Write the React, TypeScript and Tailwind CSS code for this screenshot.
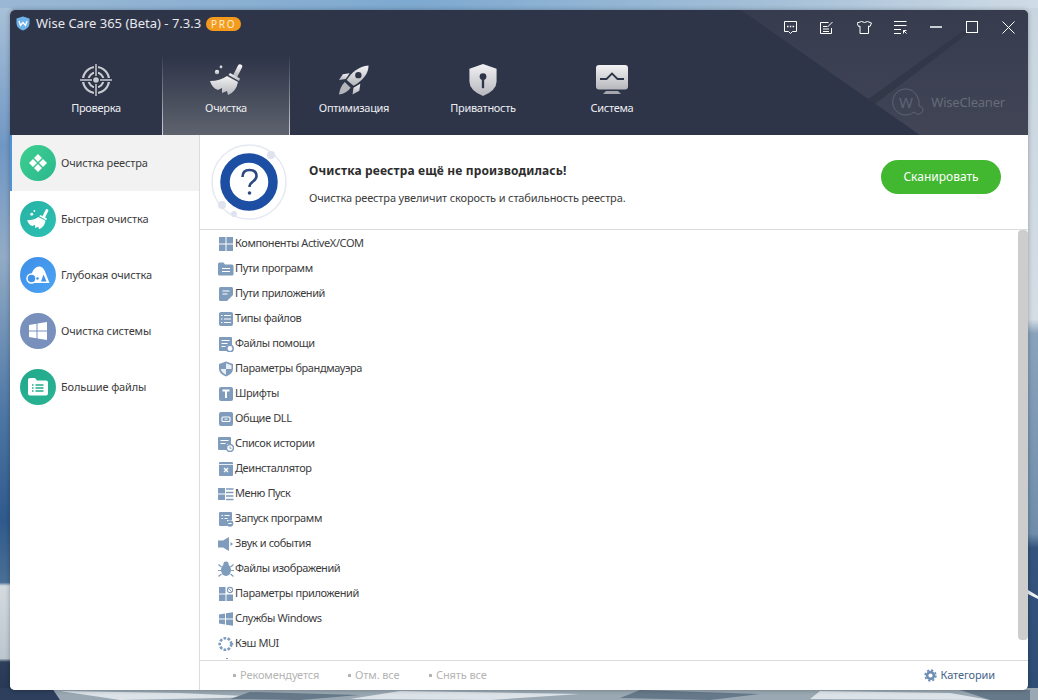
import React from 'react';

const font = "font-['Noto_Sans','Liberation_Sans',sans-serif]";

const TopTab = ({
  label,
  active,
  icon,
  shift,
}: {
  label: string;
  active?: boolean;
  icon: React.ReactNode;
  shift?: string;
}) => (
  <div
    className={`flex flex-col items-center w-[128px] h-[78px] pt-[5px] ${shift ?? ''} ${
      active
        ? 'bg-gradient-to-b from-[#2f3549] to-[#5f636e] border-x [border-image:linear-gradient(to_bottom,#363c50,#d4d6da)_1]'
        : ''
    }`}
  >
    <div className="h-[36px] flex items-center justify-center">{icon}</div>
    <span className="mt-[2px] text-[11px] leading-[16px] tracking-[-0.3px] text-[#eceef2]">{label}</span>
  </div>
);

const SideItem = ({
  label,
  color,
  active,
  icon,
}: {
  label: string;
  color: string;
  active?: boolean;
  icon: React.ReactNode;
}) => (
  <div
    className={`h-[56px] flex items-center gap-[5px] ${
      active ? 'bg-[#f2f2f2] border-l-[2px] border-[#4f93d8] pl-[8px]' : 'pl-[10px]'
    }`}
  >
    <div className={`w-[36px] h-[36px] rounded-full flex items-center justify-center ${color}`}>{icon}</div>
    <span className="text-[11px] tracking-[-0.15px] text-[#3c3c3c]">{label}</span>
  </div>
);

const Broom = ({ w, h, fill }: { w: number; h: number; fill: string }) => (
  <svg width={w} height={h} viewBox="0 0 33 32">
    <path d="M30 2.500l-4.500 9" stroke={fill} strokeWidth="4.500" strokeLinecap="round" fill="none" />
    <path d="M20 9l10 5.500-1 2.500-10.500-6z" fill={fill} />
    <path d="M17 12q-7 5-17 5 2 7 8 9l4-2v5l5-2 1 4q8-3 10-13z" fill={fill} />
    <circle cx="7" cy="8" r="2.200" fill={fill} />
    <circle cx="11" cy="3" r="1.400" fill={fill} />
  </svg>
);

// small list glyphs, all in the same slate blue
const c = '#7f9cbd';
const listIcons: Record<string, React.ReactNode> = {
  activex: (
    <>
      <rect x="1" y="1" width="6.500" height="6.500" fill={c} />
      <rect x="8.500" y="1" width="6.500" height="6.500" fill={c} />
      <rect x="1" y="8.500" width="6.500" height="6.500" fill={c} />
      <rect x="8.500" y="8.500" width="6.500" height="6.500" fill={c} />
    </>
  ),
  folder: (
    <>
      <path d="M0 3q0-1.500 1.500-1.500h4l1.500 2h7q1.500 0 1.500 1.500v8q0 1.500-1.500 1.500h-12.500q-1.500 0-1.500-1.500z" fill={c} />
      <path d="M4 7.500h8M4 10.500h8" stroke="#fff" strokeWidth="1.200" />
    </>
  ),
  file: (
    <>
      <path d="M2.500 1h11q1.500 0 1.500 1.500v6.500l-6 6h-6.500q-1.500 0-1.500-1.500v-11q0-1.500 1.500-1.500z" fill={c} />
      <path d="M4.500 5h7M4.500 8h5" stroke="#fff" strokeWidth="1.200" />
    </>
  ),
  list: (
    <>
      <rect x="1" y="1" width="14" height="14" rx="2" fill={c} />
      <path d="M6 4.500h7M6 8h7M6 11.500h7M3 4.500h1.500M3 8h1.500M3 11.500h1.500" stroke="#fff" strokeWidth="1.100" />
    </>
  ),
  help: (
    <>
      <path d="M2 1h11q1 0 1 1v7h-5v6h-7q-1 0-1-1v-12q0-1 1-1z" fill={c} />
      <path d="M3.500 4.500h8M3.500 7.500h6M3.500 10.500h4" stroke="#fff" strokeWidth="1.100" />
      <circle cx="12" cy="12.500" r="3.200" fill="none" stroke={c} strokeWidth="1.500" />
    </>
  ),
  shield: (
    <>
      <path d="M8 .5l7 2.500v5q0 4.500-7 7.500q-7-3-7-7.500v-5z" fill={c} />
      <path d="M8 2.200l5.500 2v3.800h-5.500zM8 8h-5.300q.8 3.500 5.300 5.700z" fill="#e9eef4" />
    </>
  ),
  font: (
    <>
      <rect x="1" y="1" width="14" height="14" rx="2" fill={c} />
      <path d="M4.500 4.500h7M8 4.500v7.500" stroke="#fff" strokeWidth="2" />
    </>
  ),
  dll: (
    <>
      <rect x="1" y="1" width="14" height="14" rx="2" fill={c} />
      <rect x="4" y="6" width="8" height="4.500" rx="1" fill="none" stroke="#fff" strokeWidth="1.100" />
      <path d="M6.500 8.200h3" stroke="#fff" strokeWidth="1" />
    </>
  ),
  history: (
    <>
      <path d="M1 1h11q1 0 1 1v6h-4v6h-8q-1 0-1-1v-11q0-1 1-1z" fill={c} />
      <path d="M2.500 4.500h8M2.500 7.500h5" stroke="#fff" strokeWidth="1.100" />
      <circle cx="12" cy="12" r="3.500" fill="none" stroke={c} strokeWidth="1.600" />
      <path d="M12 10.500v1.800h1.500" stroke={c} strokeWidth="1" fill="none" />
    </>
  ),
  uninstall: (
    <>
      <rect x="1" y="1" width="14" height="14" rx="1" fill={c} />
      <path d="M1 3.500h14" stroke="#fff" strokeWidth=".8" />
      <path d="M6 7l4 4M10 7l-4 4" stroke="#fff" strokeWidth="1.300" />
    </>
  ),
  start: (
    <>
      <rect x="0" y="2" width="7" height="5.500" fill={c} />
      <rect x="0" y="8.500" width="7" height="5.500" fill={c} />
      <path d="M8 3h7.500M8 6.500h7.500M8 10h7.500M8 13.500h7.500" stroke={c} strokeWidth="1.600" />
    </>
  ),
  run: (
    <>
      <path d="M2 1h11q1 0 1 1v7h-5v6h-7q-1 0-1-1v-12q0-1 1-1z" fill={c} />
      <path d="M3.500 4.500h1.500M6.500 4.500h5M3.500 7.500h1.500M6.500 7.500h3" stroke="#fff" strokeWidth="1.100" />
      <circle cx="12" cy="12.500" r="3.300" fill={c} />
      <path d="M10.300 12.500h3.400" stroke="#fff" strokeWidth="1.100" />
    </>
  ),
  sound: (
    <>
      <path d="M0 4.500h5l6-3.500v14l-6-3.500h-5z" fill={c} />
      <path d="M12.500 6l2.500 2-2.500 2z" fill={c} />
    </>
  ),
  bug: (
    <>
      <ellipse cx="8" cy="9" rx="5" ry="6" fill={c} />
      <circle cx="8" cy="3" r="2.600" fill={c} />
      <path d="M3.500 6l-3-2.500M12.500 6l3-2.500M3 9.500h-3M13 9.500h3M3.500 13l-3 2.500M12.500 13l3 2.500" stroke={c} strokeWidth="1.200" />
    </>
  ),
  appset: (
    <>
      <rect x="1" y="1" width="6.500" height="6.500" fill={c} />
      <rect x="1" y="8.500" width="6.500" height="6.500" fill={c} />
      <rect x="8.500" y="8.500" width="6.500" height="6.500" fill={c} />
      <circle cx="12" cy="4" r="2.600" fill="none" stroke={c} strokeWidth="1.100" />
      <path d="M10.300 2.300l3.400 3.400" stroke={c} strokeWidth="1" />
    </>
  ),
  win: <path d="M1 3.500l6-1v5h-6zM8 2.300l7-1.100v6.300h-7zM1 8.500h6v5l-6-1zM8 8.500h7v6.300l-7-1.100z" fill={c} />,
  mui: (
    <>
      <circle cx="7.500" cy="8" r="5.800" fill="none" stroke={c} strokeWidth="2.600" strokeDasharray="2.700 1.400" />
      <path d="M12 6l4 2-4 2z" fill={c} />
    </>
  ),
};

const items: [string, string][] = [
  ['activex', 'Компоненты ActiveX/COM'],
  ['folder', 'Пути программ'],
  ['file', 'Пути приложений'],
  ['list', 'Типы файлов'],
  ['help', 'Файлы помощи'],
  ['shield', 'Параметры брандмауэра'],
  ['font', 'Шрифты'],
  ['dll', 'Общие DLL'],
  ['history', 'Список истории'],
  ['uninstall', 'Деинсталлятор'],
  ['start', 'Меню Пуск'],
  ['run', 'Запуск программ'],
  ['sound', 'Звук и события'],
  ['bug', 'Файлы изображений'],
  ['appset', 'Параметры приложений'],
  ['win', 'Службы Windows'],
  ['mui', 'Кэш MUI'],
];

const Wallpaper = () => (
  <svg className="absolute inset-0 w-full h-full" viewBox="0 0 1038 700" preserveAspectRatio="none">
    <defs>
      <linearGradient id="ico" x1="0" y1="0" x2="0" y2="1">
        <stop offset="0" stopColor="#f2f2f4" />
        <stop offset="1" stopColor="#b6b7bd" />
      </linearGradient>
      <linearGradient id="head" x1="0" y1="0" x2="0" y2="1">
        <stop offset="0" stopColor="#363b4e" />
        <stop offset="1" stopColor="#414556" />
      </linearGradient>
      <linearGradient id="lft" x1="0" y1="0" x2="0" y2="1">
        <stop offset="0" stopColor="#a8c0d8" />
        <stop offset=".2" stopColor="#7097c4" />
        <stop offset=".36" stopColor="#92abc6" />
        <stop offset=".58" stopColor="#4f78a6" />
        <stop offset=".74" stopColor="#2f5a8c" />
        <stop offset=".83" stopColor="#4a6f95" />
        <stop offset=".835" stopColor="#d3dae0" />
        <stop offset=".94" stopColor="#bcc6ce" />
        <stop offset=".945" stopColor="#2d3f5c" />
        <stop offset="1" stopColor="#263652" />
      </linearGradient>
      <linearGradient id="rgt" x1="0" y1="0" x2="0" y2="1">
        <stop offset="0" stopColor="#c8d5e0" />
        <stop offset=".45" stopColor="#d5dde5" />
        <stop offset=".47" stopColor="#8aa3bc" />
        <stop offset=".76" stopColor="#6f8dab" />
        <stop offset=".78" stopColor="#34547e" />
        <stop offset="1" stopColor="#2f4c74" />
      </linearGradient>
      <linearGradient id="top" x1="0" y1="0" x2="1" y2="0">
        <stop offset="0" stopColor="#9ab8d4" />
        <stop offset=".4" stopColor="#7ea9d0" />
        <stop offset=".75" stopColor="#a5c0d8" />
        <stop offset="1" stopColor="#d0dce6" />
      </linearGradient>
    </defs>
    <rect width="1038" height="12" fill="url(#top)" />
    <rect y="8" width="12" height="692" fill="url(#lft)" />
    <rect x="1026" y="8" width="12" height="692" fill="url(#rgt)" />
    <rect y="688" width="1038" height="12" fill="#9aa8b3" />
    <path d="M0 688h52l8 12h-60z" fill="#2d3f5c" />
    <path d="M60 691l120 2 90 4-150 3zM400 691l180 3-90 6-140-1zM820 691l130 2 40 7-180-1z" fill="#dbe2e8" />
    <path d="M250 692l110 3-60 5-70-1zM640 690l120 4-50 6-90-2zM960 690h70v10h-40z" fill="#66798a" />
    <path d="M1028 590l10 6v3l-10-5z" fill="#eef2f6" />
  </svg>
);

export default function App() {
  return (
    <div className={`relative w-[1038px] h-[700px] overflow-hidden p-[10px] ${font}`}>
      <Wallpaper />
      <div className="relative w-[1018px] h-[680px] flex flex-col rounded-[5px] overflow-hidden shadow-[0_0_5px_rgba(0,0,0,0.3)] bg-white">
        {/* Header */}
        <div className="relative h-[125px] shrink-0 bg-[#2f3549] overflow-hidden">
          <svg className="absolute right-0 top-0 w-[300px] h-[125px]" viewBox="0 0 300 125">
            <path d="M13 0h287v125h-108z" fill="url(#head)" />
            <path d="M139 90l96-69h8l-96 73z" fill="#333849" />
          </svg>

          <div className="relative h-[34px] flex items-center pl-[6px]">
            <div className="flex items-center -mt-[7px]">
              <svg width="14" height="15" viewBox="0 0 14 15">
                <path d="M7 .5l6.500 2v5q0 4.500-6.500 7q-6.500-2.500-6.500-7v-5z" fill="#6db3ea" />
                <path d="M3 5l1.500 4.500L7 6.500l2.500 3L11 5" stroke="#fff" strokeWidth="1.300" fill="none" />
              </svg>
              <span className="ml-[6px] text-[13px] text-[#e6e8ec]">Wise Care 365 (Beta) - 7.3.3</span>
              <span className="ml-[5px] h-[14px] w-[35px] rounded-full bg-[#f49b1d] text-[10px] leading-[14px] text-center tracking-[1.8px] text-[#fdeed2]">
                PRO
              </span>
            </div>
            <div className="ml-auto mr-[2px] flex items-center">
              <div className="w-[36px] flex justify-center pr-[4px]">
                <svg width="13" height="13" viewBox="0 0 13 13" fill="none" stroke="#fff" strokeWidth="1">
                  <path d="M.5.500h12v10h-4l-2 2-2-2h-4z" />
                  <path d="M3 5.500h1.500M5.800 5.500h1.500M8.600 5.500h1.500" strokeWidth="1.600" />
                </svg>
              </div>
              <div className="w-[36px] flex justify-center pr-[4px]">
                <svg width="13" height="13" viewBox="0 0 13 13" fill="none" stroke="#fff" strokeWidth="1">
                  <path d="M11.500 7v5.500h-11v-11h8M3 5.500h4M3 8h6M3 10.500h6M7.500 6l5-5" />
                </svg>
              </div>
              <div className="w-[36px] flex justify-center">
                <svg width="15" height="13" viewBox="0 0 15 13" fill="none" stroke="#fff" strokeWidth="1">
                  <path d="M4.500.5q3 2 6 0l4 1.500-1.500 3.500-1.500-.5v7.500h-8.500v-7.500l-1.500.5-1.500-3.500z" />
                </svg>
              </div>
              <div className="w-[36px] flex justify-center">
                <svg width="13" height="13" viewBox="0 0 13 13" fill="none" stroke="#fff" strokeWidth="1">
                  <path d="M0 .5h12.500M0 4.500h12.500M0 8.500h7M0 12.500h7M9.500 9.500h3M9.500 9.500v3M9.500 9.500l3 3" />
                </svg>
              </div>
              <div className="w-[36px] flex justify-center">
                <div className="w-[12px] h-[2px] bg-[#c9ccd2]" />
              </div>
              <div className="w-[36px] flex justify-center">
                <div className="w-[12px] h-[12px] border border-white" />
              </div>
              <div className="w-[36px] flex justify-center">
                <svg width="13" height="13" viewBox="0 0 13 13" stroke="#fff" strokeWidth="1">
                  <path d="M.5.500l12 12M12.500.500l-12 12" />
                </svg>
              </div>
            </div>
          </div>

          <div className="relative flex pl-[24px] mt-[13px]">
            <TopTab
              shift="pr-[4px]"
              label="Проверка"
              icon={
                <svg width="32" height="32" viewBox="0 0 32 32" fill="none" stroke="#c9cacf">
                  <circle cx="16" cy="16" r="13" strokeWidth="2.200" />
                  <circle cx="16" cy="16" r="7.500" strokeWidth="2" />
                  <circle cx="16" cy="16" r="2.800" fill="#c9cacf" stroke="none" />
                  <path d="M16 0v12M16 20v12M0 16h12M20 16h12" stroke="#2f3549" strokeWidth="4" />
                  <path d="M16 0v12M16 20v12M0 16h12M20 16h12" strokeWidth="1.500" />
                </svg>
              }
            />
            <TopTab active label="Очистка" icon={<Broom w={33} h={32} fill="url(#ico)" />} />
            <TopTab
              label="Оптимизация"
              icon={
                <svg width="30" height="30" viewBox="0 0 31 30">
                  <path d="M11 8l-7 1-4 6 7-1z" fill="url(#ico)" />
                  <path d="M22 19l-1 7-7 4 1-7z" fill="url(#ico)" />
                  <path d="M30.500 0c-10 1-17.500 7-22.500 15l7 6c9-5 15.500-12 15.500-21z" fill="url(#ico)" />
                  <circle cx="20" cy="10" r="3.300" fill="#2f3549" />
                  <path d="M6 17l6 6q-4 6-12 7 1-8 6-13z" fill="#b4b5bb" />
                </svg>
              }
            />
            <TopTab
              shift="pl-[2px]"
              label="Приватность"
              icon={
                <svg width="28" height="32" viewBox="0 0 28 33">
                  <path d="M14 0l14 5v13q0 9-14 15q-14-6-14-15v-13z" fill="url(#ico)" />
                  <circle cx="14" cy="13" r="3.500" fill="#2f3549" />
                  <path d="M14 14v10" stroke="#2f3549" strokeWidth="2.400" strokeLinecap="round" />
                </svg>
              }
            />
            <TopTab
              shift="pl-[4px]"
              label="Система"
              icon={
                <svg width="32" height="30" viewBox="0 0 32 30">
                  <rect width="32" height="24.500" rx="3" fill="url(#ico)" />
                  <path d="M4 14h6.500l5.500-5.500 5.500 5.500h6.500" stroke="#2f3549" strokeWidth="1.800" fill="none" />
                  <path d="M10 26h12l3 3h-18z" fill="#a5a7ad" />
                </svg>
              }
            />
            <div className="absolute right-[23px] top-[31px] flex items-center gap-[5px]">
              <svg width="35" height="30" viewBox="0 0 35 30" fill="none" stroke="#5f6473" strokeWidth="1">
                <path d="M15 1a13 13 0 1 0 8 23q2 3 6 2 4-2 3-5-1-3-4-3 1-5-2-10-4-7-11-7z" />
                <text x="8" y="20" fontSize="15" fill="#5f6473" stroke="none">
                  W
                </text>
              </svg>
              <span className="text-[13px] tracking-[-0.2px] text-[#666b79]">WiseCleaner</span>
            </div>
          </div>
        </div>

        {/* Body */}
        <div className="flex-1 flex min-h-0">
          <div className="w-[190px] shrink-0 border-r border-[#dcdcdc] bg-white">
            <SideItem
              active
              label="Очистка реестра"
              color="bg-gradient-to-br from-[#3dcf8e] to-[#2bb88f]"
              icon={
                <svg width="20" height="20" viewBox="0 0 20 20" fill="#fff">
                  <path d="M10 1l4 4-4 4-4-4zM5 6l4 4-4 4-4-4zM15 6l4 4-4 4-4-4zM10 11l4 4-4 4-4-4z" />
                </svg>
              }
            />
            <SideItem
              label="Быстрая очистка"
              color="bg-gradient-to-br from-[#27b3a4] to-[#2cc0b4]"
              icon={<Broom w={22} h={21} fill="#fff" />}
            />
            <SideItem
              label="Глубокая очистка"
              color="bg-gradient-to-br from-[#3f8fe8] to-[#4ba3f2]"
              icon={
                <svg width="26" height="20" viewBox="0 0 26 20">
                  <path d="M6 10q3-9 9-8.500 3 .5 5 5l4.500 11.500h-17z" fill="#fff" />
                  <path d="M18.500 9.500l3 7h-5.500q1.500-4 2.500-7z" fill="#4192ea" />
                  <circle cx="6.500" cy="13.500" r="4.500" fill="#4192ea" stroke="#fff" strokeWidth="1.500" />
                  <circle cx="12.500" cy="13.500" r="1.300" fill="#4192ea" />
                </svg>
              }
            />
            <SideItem
              label="Очистка системы"
              color="bg-[#7890bb]"
              icon={
                <svg width="18" height="18" viewBox="0 0 18 18" fill="#fff">
                  <path d="M0 3l7.500-1.200v6.700h-7.500zM8.500 1.600l9.500-1.600v8.500h-9.500zM0 9.500h7.500v6.700l-7.500-1.200zM8.500 9.500h9.500v8.500l-9.500-1.600z" />
                </svg>
              }
            />
            <SideItem
              label="Большие файлы"
              color="bg-gradient-to-br from-[#1fa98a] to-[#2bb394]"
              icon={
                <svg width="20" height="18" viewBox="0 0 20 18">
                  <path d="M0 2q0-2 2-2h5l2 2.500h9q2 0 2 2v11q0 2-2 2h-16q-2 0-2-2z" fill="#fff" />
                  <path d="M4 7h1.500M7.500 7h8M4 10h1.500M7.500 10h8M4 13h1.500M7.500 13h8" stroke="#22ab8d" strokeWidth="1.400" />
                </svg>
              }
            />
          </div>

          <div className="flex-1 flex flex-col min-w-0">
            <div className="h-[95px] shrink-0 flex items-center border-b border-[#dcdcdc] pl-[10px] pr-[27px]">
              <svg width="78" height="78" viewBox="0 0 78 78" className="shrink-0">
                <circle cx="39" cy="39" r="37" fill="none" stroke="#e6e9f2" strokeWidth="1.500" />
                <circle cx="39" cy="39" r="24" fill="#fff" stroke="#1c4ea3" strokeWidth="9.500" />
                <circle cx="61" cy="12" r="4" fill="#dfe3ee" />
                <circle cx="12" cy="62" r="4" fill="#dfe3ee" />
                <circle cx="24" cy="71" r="3" fill="#dfe3ee" />
                <path d="M32.500 34q0-7 7-7t7 6q0 3-3.500 5.500t-3.500 5.500" fill="none" stroke="#2d4a80" strokeWidth="2.600" />
                <circle cx="39.500" cy="50" r="1.800" fill="#2d4a80" />
              </svg>
              <div className="ml-[21px] flex-1 pt-[3px]">
                <div className="text-[12px] font-bold tracking-[0.15px] text-[#2d2d2d] leading-[18px]">
                  Очистка реестра ещё не производилась!
                </div>
                <div className="mt-[10px] text-[11px] tracking-[-0.14px] text-[#3c3c3c] leading-[16px]">
                  Очистка реестра увеличит скорость и стабильность реестра.
                </div>
              </div>
              <button className="w-[120px] h-[34px] mb-[10px] rounded-full bg-[#41b82f] text-white text-[12px]">
                Сканировать
              </button>
            </div>

            <div className="relative flex-1 min-h-0 overflow-hidden pl-[18px] pt-[1px]">
              {items.map(([key, label]) => (
                <div key={key} className="h-[25px] flex items-center gap-[1px]">
                  <svg width="16" height="16" viewBox="0 0 16 16" className="shrink-0">
                    {listIcons[key]}
                  </svg>
                  <span className="text-[11px] tracking-[-0.4px] text-[#3c3c3c]">{label}</span>
                </div>
              ))}
              <div className="mt-[2px] ml-[8px] w-[2px] h-[1px] bg-[#7f9cbd]" />
              <div className="absolute right-0 top-0 w-[10px] h-[410px] rounded-[4px] bg-[#cdcdcd]" />
            </div>

            <div className="h-[30px] shrink-0 border-t border-[#dcdcdc] flex items-center pl-[31px] pr-[33px] text-[11px] tracking-[-0.1px] text-[#b4b4b4]">
              <span className="w-[2px] h-[2px]" />
              <span className="w-[115px] flex items-center gap-[4px]">
                <span className="w-[3px] h-[3px] bg-[#b4b4b4]" />
                Рекомендуется
              </span>
              <span className="w-[81px] flex items-center gap-[4px]">
                <span className="w-[3px] h-[3px] bg-[#b4b4b4]" />
                Отм. все
              </span>
              <span className="flex items-center gap-[4px]">
                <span className="w-[3px] h-[3px] bg-[#b4b4b4]" />
                Снять все
              </span>
              <span className="ml-auto flex items-center gap-[3px] text-[#47648a]">
                <svg width="13" height="13" viewBox="0 0 13 13" fill="none" stroke="#6e8fb5">
                  <circle cx="6.500" cy="6.500" r="3.400" strokeWidth="2.600" />
                  <circle cx="6.500" cy="6.500" r="5.400" strokeWidth="1.600" strokeDasharray="2.200 2.040" />
                </svg>
                Категории
              </span>
            </div>
          </div>
        </div>
      </div>
    </div>
  );
}
